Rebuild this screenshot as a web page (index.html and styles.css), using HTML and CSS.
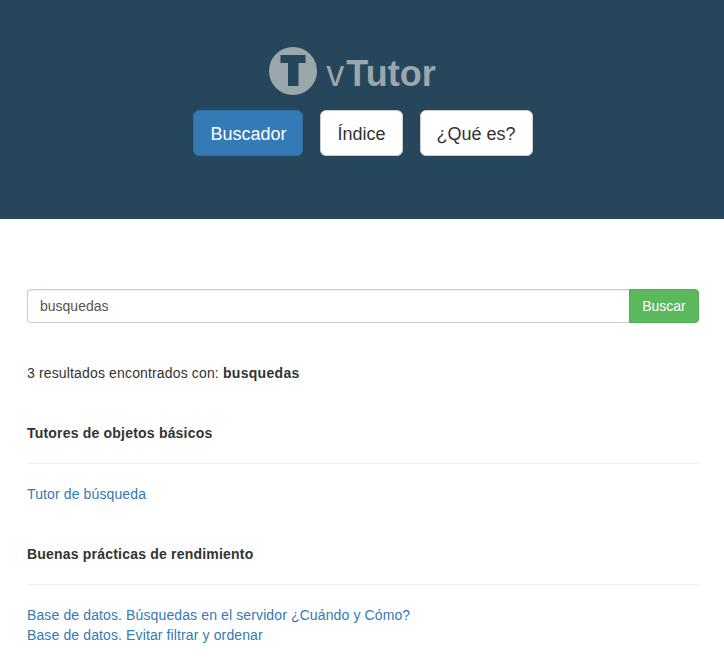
FILE: index.html
```html
<!DOCTYPE html>
<html lang="es">
<head>
<meta charset="utf-8">
<title>vTutor</title>
<link rel="stylesheet" href="styles.css">
</head>
<body>
<header class="hero">
  <div class="logo">
    <svg class="logo-mark" width="48" height="48" viewBox="0 0 48 48" aria-hidden="true">
      <circle cx="24" cy="24" r="24" fill="#9aa7ab"/>
      <path d="M11.500 8H36.500V16H29.500V39H19V16H11.500Z" fill="#26465b"/>
    </svg>
    <span class="logo-text"><span class="logo-v">v</span><span class="logo-name">Tutor</span></span>
  </div>
  <nav class="nav">
    <a class="pill pill-active" href="#">Buscador</a>
    <a class="pill" href="#">Índice</a>
    <a class="pill" href="#">¿Qué es?</a>
  </nav>
</header>
<main class="content">
  <form class="search">
    <input class="search-input" type="text" value="busquedas">
    <button class="search-button" type="button">Buscar</button>
  </form>
  <p class="summary">3 resultados encontrados con: <strong>busquedas</strong></p>
  <section class="group">
    <h2 class="group-title">Tutores de objetos básicos</h2>
    <ul class="links">
      <li><a href="#">Tutor de búsqueda</a></li>
    </ul>
  </section>
  <section class="group">
    <h2 class="group-title">Buenas prácticas de rendimiento</h2>
    <ul class="links">
      <li><a href="#">Base de datos. Búsquedas en el servidor ¿Cuándo y Cómo?</a></li>
      <li><a href="#">Base de datos. Evitar filtrar y ordenar</a></li>
    </ul>
  </section>
</main>
</body>
</html>
```
FILE: styles.css
```css
* { box-sizing: border-box; }
html, body { margin: 0; padding: 0; }
body {
  font-family: "Liberation Sans", Arial, sans-serif;
  font-size: 14px;
  line-height: 20px;
  color: #333;
  background: #fff;
  letter-spacing: .12px;
}
a { color: #337ab7; text-decoration: none; }

.hero {
  height: 219px;
  background: #26465b;
  padding-top: 47px;
  display: flex;
  flex-direction: column;
  align-items: center;
}
.logo {
  display: flex;
  align-items: center;
  height: 48px;
  gap: 9px;
  padding-right: 19px;
}
.logo-mark { display: block; }
.logo-text {
  font-size: 36px;
  line-height: 48px;
  letter-spacing: 0;
  color: #9aa7ab;
  position: relative;
  top: 3px;
}
.logo-name { font-weight: bold; margin-left: 2px; }
.nav {
  display: flex;
  gap: 17px;
  margin-top: 15px;
  padding-left: 2px;
}
.pill {
  display: block;
  height: 46px;
  padding: 12px 16px 0;
  font-size: 18px;
  line-height: 22px;
  letter-spacing: 0;
  color: #333;
  background: #fff;
  border: 1px solid #ccc;
  border-radius: 6px;
}
.pill-active {
  color: #fff;
  background: #337ab7;
  border-color: #2e6da4;
}

.content { padding: 70px 25px 0 27px; }
.search { display: flex; height: 34px; margin: 0; }
.search-input {
  flex: 1;
  min-width: 0;
  height: 34px;
  padding: 6px 12px;
  font: 14px/20px "Liberation Sans", Arial, sans-serif;
  color: #555;
  background: #fff;
  border: 1px solid #ccc;
  border-right: 0;
  border-radius: 4px 0 0 4px;
  box-shadow: inset 0 1px 1px rgba(0, 0, 0, .075);
  outline: 0;
}
.search-button {
  width: 70px;
  height: 34px;
  padding: 0;
  font: 14px/20px "Liberation Sans", Arial, sans-serif;
  color: #fff;
  background: #5cb85c;
  border: 1px solid #4cae4c;
  border-radius: 0 4px 4px 0;
}
.summary { margin: 40px 0 0; letter-spacing: .15px; }
.summary strong { letter-spacing: .3px; }
.group { margin-top: 40px; }
.group-title {
  margin: 0;
  padding-bottom: 20px;
  font-size: 14px;
  line-height: 20px;
  font-weight: bold;
  letter-spacing: .2px;
  border-bottom: 1px solid #eee;
}
.links { list-style: none; margin: 20px 0 0; padding: 0; }
```
